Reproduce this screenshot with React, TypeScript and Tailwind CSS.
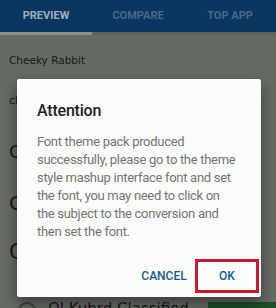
const tabs = [
  { label: 'PREVIEW', active: true },
  { label: 'COMPARE', active: false },
  { label: 'TOP APP', active: false },
];

const rows = [
  { text: 'cheeky rabbit classic', cls: 'text-[11px] h-[45px]' },
  { text: 'Comfortaa Rounded', cls: 'text-[18px] h-[54px]' },
  { text: 'Courier Classic', cls: 'text-[20px] h-[50px]' },
  { text: 'Cursive Deluxe', cls: 'text-[21px] h-[50px]' },
];

const lines = [
  'Font theme pack produced',
  'successfully, please go to the theme',
  'style mashup interface font and set',
  'the font, you may need to click on',
  'the subject to the conversion and',
  'then set the font.',
];

export default function App() {
  return (
    <div className="relative w-[276px] h-[308px] overflow-hidden bg-[#666a64] font-['Roboto',sans-serif]">
      <div className="flex h-[32px] bg-[#0b3660]">
        {tabs.map((t) => (
          <div
            key={t.label}
            className={`flex-1 flex items-center justify-center text-[11px] font-bold ${
              t.active ? 'text-[#9db1c2]' : 'text-[#46698a]'
            }`}
          >
            {t.label}
          </div>
        ))}
      </div>
      <div className="flex h-[3px] bg-[#5c615b]">
        <div className="w-[92px] bg-[#8b918e]" />
      </div>

      <div className="px-[9px] pt-[18px] font-['DejaVu_Sans',sans-serif] text-[#161816]">
        <div className="text-[10.5px] h-[26px] leading-[14px]">Cheeky Rabbit</div>
        {rows.map((r) => (
          <div key={r.text} className={`flex items-center ${r.cls}`}>
            {r.text}
          </div>
        ))}
      </div>

      <div className="absolute left-0 right-0 top-[298px] flex items-start h-[10px]">
        <div className="ml-[18px] mt-[4px] w-[18px] h-[18px] rounded-full border-2 border-[#3e423d]" />
        <div className="ml-[12px] mt-[2px] text-[15px] leading-[18px] text-[#141614] font-['DejaVu_Sans',sans-serif] whitespace-nowrap">
          Ol Kubrd Classified
        </div>
        <div className="ml-auto mt-[4px] w-[68px] h-[8px] bg-[#1d5128]" />
      </div>

      <div className="absolute left-[17px] top-[79px] w-[244px] h-[218px] bg-[#fafcf9] rounded-[2px] shadow-[0_6px_14px_rgba(0,0,0,0.45)]">
        <div className="pl-[20px] pr-[8px] pt-[20px]">
          <div className="text-[16px] leading-[23px] font-medium tracking-[-0.2px] text-[#1e201e]">Attention</div>
          <div className="mt-[11px] text-[13px] leading-[18px] tracking-[-0.3px] text-[#737573]">
            {lines.map((l) => (
              <div key={l} className="whitespace-nowrap">{l}</div>
            ))}
          </div>
        </div>
        <div className="absolute right-[2px] top-[180px] flex items-center">
          <div className="w-[48px] h-[34px] mr-[7px] flex items-center justify-center text-[12px] font-medium text-[#125c86]">
            CANCEL
          </div>
          <div className="w-[64px] h-[34px] flex items-center justify-center border-[3px] border-[#cc1830] text-[12px] font-medium text-[#125c86]">
            OK
          </div>
        </div>
      </div>
    </div>
  );
}
